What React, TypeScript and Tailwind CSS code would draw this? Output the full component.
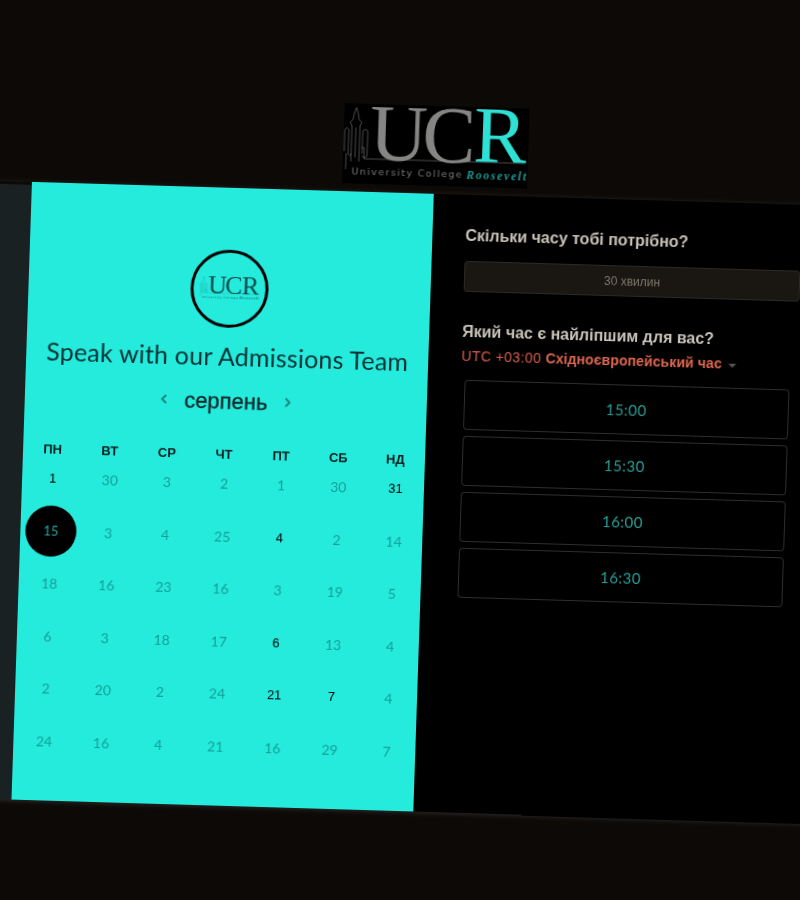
import { ChevronLeft, ChevronRight } from "lucide-react";

const weekdays = ["ПН", "ВТ", "СР", "ЧТ", "ПТ", "СБ", "НД"];

// [day, available]
const rows: [number, boolean][][] = [
  [[1, true], [30, false], [3, false], [2, false], [1, false], [30, false], [31, true]],
  [[15, false], [3, false], [4, false], [25, false], [4, true], [2, false], [14, false]],
  [[18, false], [16, false], [23, false], [16, false], [3, false], [19, false], [5, false]],
  [[6, false], [3, false], [18, false], [17, false], [6, true], [13, false], [4, false]],
  [[2, false], [20, false], [2, false], [24, false], [21, true], [7, true], [4, false]],
  [[24, false], [16, false], [4, false], [21, false], [16, false], [29, false], [7, false]],
];

const times = ["15:00", "15:30", "16:00", "16:30"];

type LogoProps = { className: string; main: string; accent: string; small: string; script: string; line: string };

const Logo = ({ className, main, accent, small, script, line }: LogoProps) => (
  <svg viewBox="0 0 185 80" className={className}>
    <g fill="none" stroke={line} strokeWidth="0.7">
      <path d="M8 58V22l-2-3 3-3 1-6 2-6 2 6 1 6 3 3-2 3v36" />
      <path d="M1 48V27c0-3 4-3 4 0v23c0 3 3 3 3 0M19 50V28c0-3 5-3 5 0v24c0 2-5 2-5 0M12 24v30" />
      <path d="M3 50v16M18 44h3v11h161" />
    </g>
    <text x="26" y="56" fontFamily="Liberation Serif" fontSize="80" letterSpacing="-5" fill={main}>UC</text>
    <text x="130" y="55" fontFamily="Liberation Serif" fontSize="80" fill={accent}>R</text>
    <text x="9" y="71" fontFamily="DejaVu Sans" fontSize="9.5" letterSpacing="1.4" fill={small}>University College</text>
    <text x="124" y="72" fontFamily="Liberation Serif" fontSize="11.5" fontStyle="italic" fontWeight="700" letterSpacing="1.8" fill={script}>Roosevelt</text>
  </svg>
);

const DayCell = ({ day, available, selected }: { day: number; available: boolean; selected: boolean }) => {
  if (selected) {
    return (
      <div className="flex h-[52.5px] items-center justify-center">
        <span className="flex h-[51px] w-[51px] items-center justify-center rounded-full bg-black font-['Lato',sans-serif] text-[13px] text-[#1fa8a3]">
          {day}
        </span>
      </div>
    );
  }
  return (
    <div
      className={
        available
          ? "flex h-[52.5px] items-center justify-center font-['Liberation_Sans',sans-serif] text-[13px] text-black"
          : "flex h-[52.5px] items-center justify-center font-['Lato',sans-serif] text-[14px] text-[#129f99]"
      }
    >
      {day}
    </div>
  );
};

export default function App() {
  return (
    <div className="h-[900px] w-[800px] overflow-hidden bg-[#0c0907]">
      <div className="ml-[37.5px] w-[804px] origin-top-left rotate-[1.7deg] skew-x-[-0.2deg] pt-[94px] blur-[0.3px]">
        <div className="mb-[8px] flex justify-center">
          <Logo className="h-[80px] w-[185px] bg-black" main="#858583" accent="#2fe0d5" small="#77777a" script="#1f9a94" line="#6a6a6a" />
        </div>

        <div className="-ml-[60px] flex h-[618px] w-[864px] shadow-[0_1px_5px_rgba(80,80,80,0.5)]">
          <div className="mt-[3px] w-[60px] bg-[#1a2122]" />

          <div className="flex w-[402px] flex-col items-center bg-[#25ebdd] pt-[62px]">
            <div className="flex h-[78px] w-[78px] items-center justify-center rounded-full border-[3px] border-black">
              <Logo className="h-[26px] w-[60px]" main="#0b4a4c" accent="#0b4a4c" small="#0f7c78" script="#0f7c78" line="#0f8f8a" />
            </div>
            <h1 className="mt-[12px] font-['Lato',sans-serif] text-[25px] leading-[32px] tracking-[0.2px] text-[#082f32]">
              Speak with our Admissions Team
            </h1>
            <div className="mt-[15px] flex h-[28px] w-[139px] items-center justify-between text-[#178883]">
              <ChevronLeft size={14} strokeWidth={3.5} />
              <span className="mt-[1px] font-['Liberation_Sans',sans-serif] text-[22px] text-[#0b2426] [-webkit-text-stroke:0.3px_#0b2426]">
                серпень
              </span>
              <ChevronRight size={14} strokeWidth={3.5} />
            </div>

            <div className="mt-[32px] grid w-[400px] grid-cols-7">
              {weekdays.map((d) => (
                <div key={d} className="h-4 text-center font-['Liberation_Sans',sans-serif] text-[13px] leading-4 font-bold text-[#0b1f20]">
                  {d}
                </div>
              ))}
            </div>
            <div className="-mt-[5.5px] ml-[2px] grid w-[400px] grid-cols-7">
              {rows.map((row, r) =>
                row.map(([day, available], c) => (
                  <DayCell key={`${r}-${c}`} day={day} available={available} selected={r === 1 && c === 0} />
                ))
              )}
            </div>
          </div>

          <div className="w-[402px] bg-black pl-[33px] pt-[32px] font-['Liberation_Sans',sans-serif]">
            <h2 className="text-[16px] leading-[18px] font-bold text-[#c8c3ba]">Скільки часу тобі потрібно?</h2>
            <div className="mt-[16px] flex h-[31px] w-[336px] items-center justify-center rounded-sm border border-[#2c2a26] bg-[#1a1612] text-[12px] text-[#7d766b]">
              30 хвилин
            </div>
            <h2 className="mt-[31px] text-[16px] leading-[18px] font-bold text-[#c8c3ba]">Який час є найліпшим для вас?</h2>
            <div className="mt-[6px] flex items-center text-[14px] leading-[18px] text-[#d9604c]">
              <span className="tracking-[0.4px]">UTC +03:00&nbsp;</span>
              <span className="font-bold tracking-[0.1px] text-[#e0684f]">Східноєвропейський час</span>
              <span className="ml-[6px] mt-[3px] border-x-[4px] border-t-[4px] border-x-transparent border-t-[#555]" />
            </div>
            <div className="ml-[4px] mt-[15px] flex w-[325px] flex-col gap-[6px]">
              {times.map((t) => (
                <div key={t} className="flex h-[50px] items-center justify-center rounded-sm border border-[#2e2e2e] font-['Lato',sans-serif] text-[15px] tracking-[0.5px] text-[#2a9d96]">
                  {t}
                </div>
              ))}
            </div>
          </div>
        </div>
      </div>
    </div>
  );
}
